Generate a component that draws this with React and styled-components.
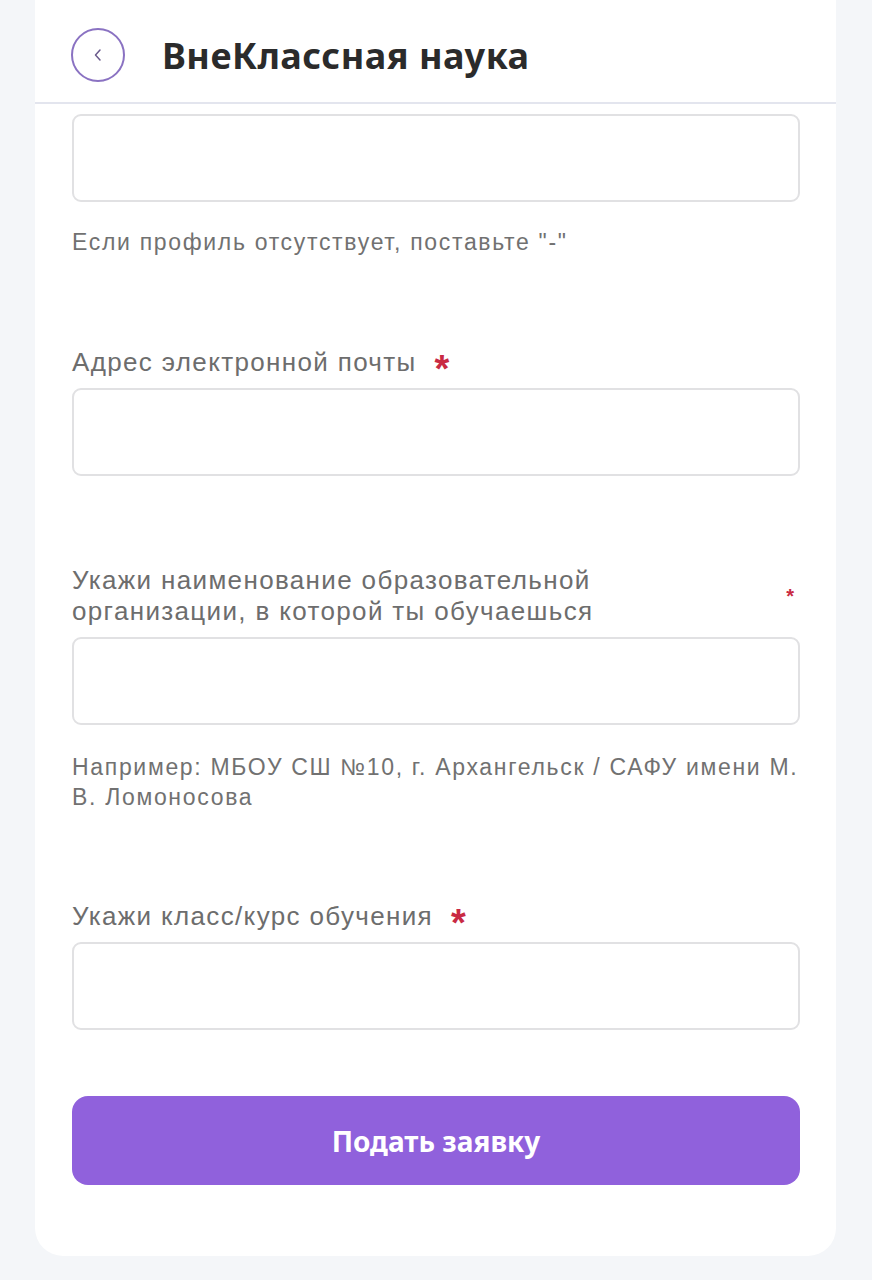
import React from "react";
import styled, { createGlobalStyle } from "styled-components";

const GlobalStyle = createGlobalStyle`
	html, body {
		margin: 0;
		padding: 0;
		background: #f4f6f9;
	}
	body {
		font-family: "Liberation Sans", Arial, sans-serif;
	}
`;

const Page = styled.div`
	min-height: 1280px;
	padding: 0 36px 0 35px;
	box-sizing: border-box;
`;

const Card = styled.div`
	background: #ffffff;
	border-radius: 0 0 28px 28px;
	padding-bottom: 71px;
`;

const Header = styled.div`
	height: 104px;
	display: flex;
	align-items: center;
	gap: 37px;
	padding: 8px 0 0 36px;
	box-sizing: border-box;
	border-bottom: 2px solid #e3e5ee;
`;

const BackButton = styled.button`
	width: 54px;
	height: 54px;
	border-radius: 50%;
	border: 2px solid #8a72c2;
	background: #fff;
	display: flex;
	align-items: center;
	justify-content: center;
	padding: 0;
`;

const Title = styled.h1`
	margin: 0;
	font-family: "Noto Sans", Inter, sans-serif;
	font-weight: 700;
	font-size: 36px;
	letter-spacing: 0.5px;
	color: #2b2b2b;
`;

const Form = styled.form`
	display: flex;
	flex-direction: column;
	padding: 10px 36px 0 37px;
`;

const Field = styled.div`
	display: flex;
	flex-direction: column;
	margin-bottom: ${props => props.gap || 0}px;
`;

const Label = styled.div`
	display: flex;
	align-items: ${props => (props.multi ? "center" : "flex-start")};
	justify-content: ${props => (props.multi ? "space-between" : "flex-start")};
	font-size: 26px;
	line-height: 31px;
	color: #6d6d6d;
	margin-bottom: 10px;
`;

const LabelText = styled.span`
	letter-spacing: 1.35px;
`;

const Star = styled.span`
	color: #c92a43;
	font-size: ${props => (props.small ? "20px" : "38px")};
	font-weight: 700;
	margin-left: ${props => (props.small ? 0 : 18)}px;
	margin-right: ${props => (props.small ? 6 : 0)}px;
	line-height: 31px;
	height: 31px;
	padding-top: ${props => (props.small ? 0 : 7)}px;
	box-sizing: border-box;
`;

const Input = styled.input`
	height: 88px;
	box-sizing: border-box;
	border: 2px solid #e1e1e3;
	border-radius: 9px;
	background: #fff;
	font-size: 22px;
	padding: 0 16px;
	outline: none;
`;

const Hint = styled.div`
	margin-top: ${props => props.top || 25}px;
	font-size: 23px;
	line-height: 30px;
	color: #717171;
	letter-spacing: 1.68px;
`;

const SubmitButton = styled.button`
	height: 89px;
	border: none;
	border-radius: 16px;
	background: #9061dc;
	color: #ffffff;
	font-family: "Noto Sans", Inter, sans-serif;
	font-weight: 700;
	font-size: 28px;
	cursor: pointer;
`;

const Chevron = () => (
	<svg width="14" height="16" viewBox="0 0 14 16" fill="none">
		<path d="M9 3 L4.5 8 L9 13" stroke="#6a5a8c" strokeWidth="1.5" strokeLinecap="round" strokeLinejoin="round" />
	</svg>
);

export default function App() {
	return (
		<>
			<GlobalStyle />
			<Page>
				<Card>
					<Header>
						<BackButton type="button">
							<Chevron />
						</BackButton>
						<Title>ВнеКлассная наука</Title>
					</Header>
					<Form onSubmit={e => e.preventDefault()}>
						<Field gap={90}>
							<Input />
							<Hint>Если профиль отсутствует, поставьте "-"</Hint>
						</Field>
						<Field gap={89}>
							<Label>
								<LabelText>Адрес электронной почты</LabelText>
								<Star>*</Star>
							</Label>
							<Input />
						</Field>
						<Field gap={89}>
							<Label multi>
								<LabelText>
									Укажи наименование образовательной
									<br />
									организации, в которой ты обучаешься
								</LabelText>
								<Star small>*</Star>
							</Label>
							<Input />
							<Hint top={27}>
								Например: МБОУ СШ №10, г. Архангельск / САФУ имени М.
								<br />
								В. Ломоносова
							</Hint>
						</Field>
						<Field gap={66}>
							<Label>
								<LabelText>Укажи класс/курс обучения</LabelText>
								<Star>*</Star>
							</Label>
							<Input />
						</Field>
						<SubmitButton type="submit">Подать заявку</SubmitButton>
					</Form>
				</Card>
			</Page>
		</>
	);
}
